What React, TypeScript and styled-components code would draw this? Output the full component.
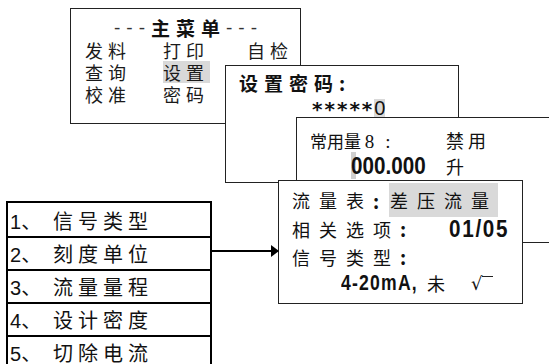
import React from "react";
import styled, { createGlobalStyle } from "styled-components";

const Global = createGlobalStyle`
  html, body {
    margin: 0;
    padding: 0;
    background: #ffffff;
  }
  body {
    font-family: "Noto Sans CJK SC", "Liberation Sans", sans-serif;
    color: #111;
  }
`;

const Canvas = styled.div`
  position: relative;
  width: 549px;
  height: 364px;
  overflow: hidden;
  background: #fff;
`;

// screens laid on the canvas like windows on a desktop
const Screen = styled.div<{ x: number; y: number; w: number; h: number; z: number }>`
  position: absolute;
  left: ${(p) => p.x}px;
  top: ${(p) => p.y}px;
  width: ${(p) => p.w}px;
  height: ${(p) => p.h}px;
  z-index: ${(p) => p.z};
  box-sizing: border-box;
  border: 1px solid #222;
  background: #fff;
  display: flex;
  flex-direction: column;
`;

const MenuBox = styled(Screen)`
  padding: 7px 0 0 14px;
`;

const Heading = styled.div`
  display: flex;
  justify-content: center;
  align-items: center;
  height: 23px;
  padding-right: 8px;
  font-size: 19px;
`;

const Dashes = styled.span`
  font-family: "Liberation Sans", sans-serif;
  font-size: 19px;
  letter-spacing: 6px;
  color: #333;
`;

const Bold = styled.b`
  font-weight: 700;
  letter-spacing: 6px;
`;

const MenuGrid = styled.div`
  display: grid;
  grid-template-columns: 78px 84px auto;
  font-size: 18px;
  line-height: 22px;
  letter-spacing: 5px;
  color: #1a1a1a;
`;

const Hi = styled.span`
  background: #d9d9d9;
  justify-self: start;
  padding-right: 1px;
`;

const PassBox = styled(Screen)`
  padding: 5px 0 0 13px;
`;

const Title = styled.div`
  font-size: 19px;
  line-height: 24px;
  font-weight: 700;
  letter-spacing: 6px;
`;

const Stars = styled.div`
  display: flex;
  align-items: flex-start;
  padding-left: 73px;
  margin-top: 3px;
  height: 20px;
  font-family: "DejaVu Sans", sans-serif;
  font-size: 20px;
  line-height: 22px;
  font-weight: 700;
  letter-spacing: 2px;
`;

const Cursor = styled.span`
  background: #d9d9d9;
  font-family: "Liberation Sans", sans-serif;
  font-weight: 400;
  letter-spacing: 0;
  line-height: 18px;
  margin-top: 1px;
`;

const UseBox = styled(Screen)`
  padding: 9px 0 0 13px;
`;

const Row = styled.div<{ indent?: number; h?: number }>`
  display: flex;
  align-items: center;
  padding-left: ${(p) => p.indent ?? 0}px;
  height: ${(p) => p.h ?? 28}px;
  font-size: 18px;
  white-space: nowrap;
`;

const Cell = styled.span<{ w?: number; gap?: number }>`
  width: ${(p) => (p.w ? `${p.w}px` : "auto")};
  letter-spacing: ${(p) => p.gap ?? 0}px;
  flex: none;
`;

const Plain = styled.span`
  font-size: 17px;
`;

const Serif = styled.span`
  font-family: "Liberation Serif", "Noto Sans CJK SC", serif;
  font-size: 19px;
  letter-spacing: 11px;
`;

// tall condensed LCD-like digits
const Narrow = styled.span<{ size: number; gap: number; sx: number; w: number }>`
  display: inline-block;
  width: ${(p) => p.w}px;
  font-family: "Liberation Sans", sans-serif;
  font-weight: 700;
  font-size: ${(p) => p.size}px;
  line-height: 22px;
  letter-spacing: ${(p) => p.gap}px;
  transform: scaleX(${(p) => p.sx});
  transform-origin: left center;
  flex: none;
`;

const Caret = styled.span`
  background: linear-gradient(to right, #cfcfcf 0, #cfcfcf 45%, transparent 45%);
`;

const FlowBox = styled(Screen)`
  padding: 5px 0 0 13px;
`;

const Spaced = styled.span<{ gap?: number }>`
  letter-spacing: ${(p) => p.gap ?? 9}px;
  font-size: 18px;
`;

const Colon = styled.b<{ w?: number }>`
  width: ${(p) => p.w ?? 16}px;
  flex: none;
  font-size: 19px;
`;

const Shade = styled.span`
  background: #d9d9d9;
  letter-spacing: 9px;
  padding: 4px 0 4px 1px;
  margin-right: -8px;
`;

const Radical = styled.span`
  display: inline-flex;
  align-items: flex-start;
  font-family: "DejaVu Sans", sans-serif;
  font-size: 18px;
  &::after {
    content: "";
    width: 11px;
    margin-top: 3px;
    border-top: 1px solid #222;
  }
`;

const List = styled.div`
  position: absolute;
  left: 6px;
  top: 201px;
  width: 206px;
  display: flex;
  flex-direction: column;
  border: 2px solid #000;
  border-bottom: none;
  box-sizing: border-box;
`;

const ListRow = styled.div`
  height: 33px;
  box-sizing: border-box;
  display: flex;
  align-items: flex-end;
  padding: 0 0 2px 2px;
  font-family: "Liberation Sans", "Noto Sans CJK SC", sans-serif;
  font-size: 20px;
  line-height: 24px;
  & + & {
    border-top: 2px solid #000;
  }
`;

const Num = styled.span`
  width: 43px;
  flex: none;
`;

const Label = styled.span`
  letter-spacing: 5px;
`;

const Arrow = styled.svg`
  position: absolute;
  left: 211px;
  top: 244px;
  z-index: 5;
`;

const items = ["信号类型", "刻度单位", "流量量程", "设计密度", "切除电流"];

export default function App() {
  return (
    <>
      <Global />
      <Canvas>
        <MenuBox x={70} y={8} w={231} h={116} z={1}>
          <Heading>
            <Dashes>---</Dashes>
            <Bold>主菜单</Bold>
            <Dashes>---</Dashes>
          </Heading>
          <MenuGrid>
            <span>发料</span>
            <span>打印</span>
            <span>自检</span>
            <span>查询</span>
            <Hi>设置</Hi>
            <span />
            <span>校准</span>
            <span>密码</span>
            <span />
          </MenuGrid>
        </MenuBox>

        <PassBox x={225} y={65} w={234} h={118} z={2}>
          <Title>设置密码:</Title>
          <Stars>
            *****<Cursor>0</Cursor>
          </Stars>
        </PassBox>

        <UseBox x={296} y={117} w={270} h={126} z={3}>
          <Row h={26}>
            <Cell w={136}>
              <Plain>常用量 </Plain>
              <Serif>8:</Serif>
            </Cell>
            <Cell gap={4}>禁用</Cell>
          </Row>
          <Row h={26} indent={41}>
            <Narrow size={24} gap={0} sx={0.86} w={95}>
              <Caret>0</Caret>00.000
            </Narrow>
            <Cell>升</Cell>
          </Row>
        </UseBox>

        <FlowBox x={278} y={180} w={245} h={124} z={4}>
          <Row h={28}>
            <Spaced>流量表</Spaced>
            <Colon>:</Colon>
            <Shade>差压流量</Shade>
          </Row>
          <Row h={29}>
            <Spaced>相关选项</Spaced>
            <Colon w={49}>:</Colon>
            <Narrow size={24} gap={2} sx={0.86} w={62}>
              01/05
            </Narrow>
          </Row>
          <Row h={27}>
            <Spaced>信号类型</Spaced>
            <Colon>:</Colon>
          </Row>
          <Row h={26} indent={49}>
            <Narrow size={22} gap={1.5} sx={0.8} w={86}>
              4-20mA,
            </Narrow>
            <Spaced gap={26}>未</Spaced>
            <Radical>√</Radical>
          </Row>
        </FlowBox>

        <List>
          {items.map((t, i) => (
            <ListRow key={t}>
              <Num>{i + 1}、</Num>
              <Label>{t}</Label>
            </ListRow>
          ))}
        </List>

        <Arrow width="70" height="14" viewBox="0 0 70 14">
          <line x1="0" y1="7" x2="60" y2="7" stroke="#000" strokeWidth="2" />
          <polygon points="60,1 68,7 60,13" fill="#000" />
        </Arrow>
      </Canvas>
    </>
  );
}
